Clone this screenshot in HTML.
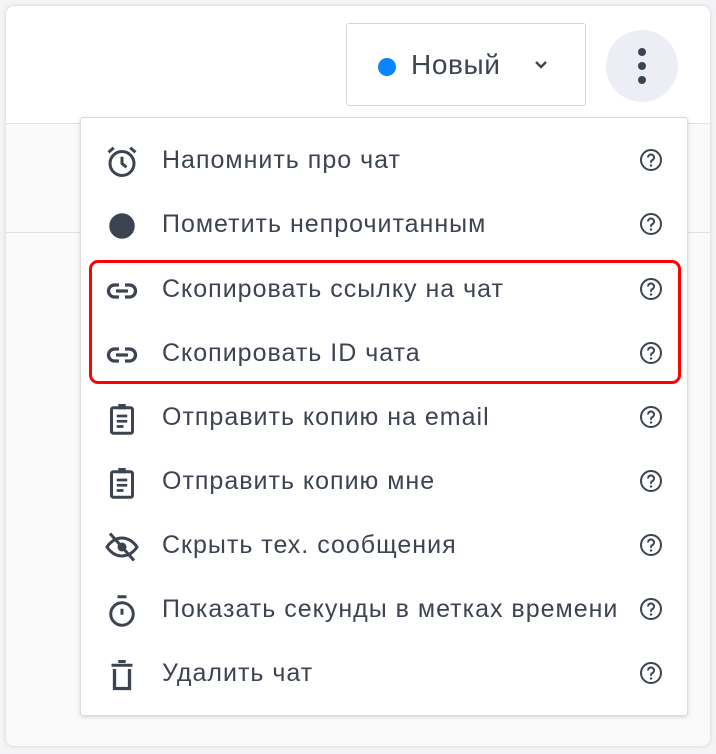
<!DOCTYPE html>
<html><head><meta charset="utf-8"><style>
*{box-sizing:border-box;margin:0;padding:0}
body{width:716px;height:754px;background:#f4f4f6;font-family:"Liberation Sans","DejaVu Sans",sans-serif;position:relative;overflow:hidden;color:#3d4451}
.card{position:absolute;left:6px;top:6px;width:704px;height:740px;background:#fafafa;border-radius:8px;box-shadow:0 0 4px rgba(0,0,0,.15);overflow:hidden}
.head{position:absolute;left:0;top:0;width:704px;height:118px;background:#fff;border-bottom:1px solid #e2e2e2}
.line2{position:absolute;left:0;top:226px;width:704px;height:1px;background:#e2e2e2}
.status{position:absolute;left:346px;top:23px;width:240px;height:83px;border:1px solid #d8d8d8;border-radius:3px;background:#fff}
.dot{position:absolute;left:31px;top:34px;width:18px;height:18px;border-radius:50%;background:#0a84ff}
.status span{position:absolute;left:64px;top:25px;font-size:28px;letter-spacing:.6px}
.kebab{position:absolute;left:606px;top:30px;width:72px;height:72px;border-radius:50%;background:#ededf5}
.kebab i{position:absolute;left:32px;width:8px;height:8px;border-radius:50%;background:#3d4451}
.menu{position:absolute;left:80px;top:117px;width:608px;height:599px;background:#fff;border:1px solid #dcdcdc;border-radius:3px;box-shadow:0 1px 4px rgba(0,0,0,.15)}
.item{position:absolute;left:0;width:606px;height:64px}
.item svg.ic{position:absolute;left:23px;top:15px}
.item .t{position:absolute;left:81px;top:17px;font-size:25px;white-space:nowrap;letter-spacing:1px}
.red{position:absolute;left:89px;top:260px;width:592px;height:124px;border:3px solid #f00;border-radius:9px}
</style></head><body>
<div class="card">
<div class="head"></div>
<div class="line2"></div>
</div>
<div class="status"><div class="dot"></div><span>Новый</span>
<svg style="position:absolute;left:186px;top:35px" width="16" height="12" viewBox="0 0 16 12"><path d="M3 3l5 5 5-5" fill="none" stroke="#3d4451" stroke-width="2.4"/></svg></div>
<div class="kebab"><i style="top:18px"></i><i style="top:32px"></i><i style="top:46px"></i></div>
<div class="menu">
<div class="item" style="top:11px"><svg class="ic" width="36" height="36" viewBox="0 0 24 24"><circle cx="12" cy="13" r="8" fill="none" stroke="#3d4451" stroke-width="2"/><path d="M12 8.5V13l3 2.5M3 5.5l3.5-3M21 5.5l-3.5-3" fill="none" stroke="#3d4451" stroke-width="2"/></svg><span class="t">Напомнить про чат</span></div>
<div class="item" style="top:75px"><svg class="ic" width="36" height="36" viewBox="0 0 24 24"><circle cx="12" cy="12" r="8.5" fill="#3d4451"/></svg><span class="t">Пометить непрочитанным</span></div>
<div class="item" style="top:140px"><svg class="ic" width="36" height="36" viewBox="0 0 24 24"><path d="M10 8H7a4 4 0 0 0 0 8h3M14 8h3a4 4 0 0 1 0 8h-3M8 12h8" fill="none" stroke="#3d4451" stroke-width="2.2"/></svg><span class="t">Скопировать ссылку на чат</span></div>
<div class="item" style="top:204px"><svg class="ic" width="36" height="36" viewBox="0 0 24 24"><path d="M10 8H7a4 4 0 0 0 0 8h3M14 8h3a4 4 0 0 1 0 8h-3M8 12h8" fill="none" stroke="#3d4451" stroke-width="2.2"/></svg><span class="t">Скопировать ID чата</span></div>
<div class="item" style="top:268px"><svg class="ic" width="36" height="36" viewBox="0 0 24 24"><rect x="5" y="4.5" width="14" height="17" rx="1.2" fill="none" stroke="#3d4451" stroke-width="2"/><rect x="9.5" y="2" width="5" height="3.5" fill="#3d4451"/><path d="M8.5 10h7M8.5 13.5h7M8.5 17h4.5" stroke="#3d4451" stroke-width="1.8"/></svg><span class="t">Отправить копию на email</span></div>
<div class="item" style="top:332px"><svg class="ic" width="36" height="36" viewBox="0 0 24 24"><rect x="5" y="4.5" width="14" height="17" rx="1.2" fill="none" stroke="#3d4451" stroke-width="2"/><rect x="9.5" y="2" width="5" height="3.5" fill="#3d4451"/><path d="M8.5 10h7M8.5 13.5h7M8.5 17h4.5" stroke="#3d4451" stroke-width="1.8"/></svg><span class="t">Отправить копию мне</span></div>
<div class="item" style="top:396px"><svg class="ic" width="36" height="36" viewBox="0 0 24 24"><path d="M2 12s3.5-6 10-6 10 6 10 6-3.5 6-10 6S2 12 2 12z" fill="none" stroke="#3d4451" stroke-width="2"/><circle cx="12" cy="12" r="3" fill="#3d4451"/><path d="M4 3l16 18" stroke="#3d4451" stroke-width="2"/></svg><span class="t">Скрыть тех. сообщения</span></div>
<div class="item" style="top:460px"><svg class="ic" width="36" height="36" viewBox="0 0 24 24"><circle cx="12" cy="14" r="7.5" fill="none" stroke="#3d4451" stroke-width="2"/><path d="M9 2.5h6M12 10.5v4" stroke="#3d4451" stroke-width="2"/></svg><span class="t">Показать секунды в метках времени</span></div>
<div class="item" style="top:524px"><svg class="ic" width="36" height="36" viewBox="0 0 24 24"><path d="M7 8v13h10V8" fill="none" stroke="#3d4451" stroke-width="2.2"/><path d="M5 5.5h14M9.5 3h5" stroke="#3d4451" stroke-width="2"/></svg><span class="t">Удалить чат</span></div>
</div>
<div class="red"></div>
<svg width="0" height="0" style="position:absolute"><defs><g id="q"><circle cx="12" cy="12" r="10" fill="none" stroke="#3d4451" stroke-width="2"/><path d="M9 9.5a3 3 0 1 1 4 2.8c-.8.4-1 1-1 2v.5" fill="none" stroke="#3d4451" stroke-width="2"/><circle cx="12" cy="17.5" r="1.2" fill="#3d4451"/></g></defs></svg>
<svg style="position:absolute;left:639px;top:148px" width="24" height="24"><use href="#q"/></svg>
<svg style="position:absolute;left:639px;top:212px" width="24" height="24"><use href="#q"/></svg>
<svg style="position:absolute;left:639px;top:277px" width="24" height="24"><use href="#q"/></svg>
<svg style="position:absolute;left:639px;top:341px" width="24" height="24"><use href="#q"/></svg>
<svg style="position:absolute;left:639px;top:405px" width="24" height="24"><use href="#q"/></svg>
<svg style="position:absolute;left:639px;top:469px" width="24" height="24"><use href="#q"/></svg>
<svg style="position:absolute;left:639px;top:533px" width="24" height="24"><use href="#q"/></svg>
<svg style="position:absolute;left:639px;top:597px" width="24" height="24"><use href="#q"/></svg>
<svg style="position:absolute;left:639px;top:661px" width="24" height="24"><use href="#q"/></svg>
</body></html>
